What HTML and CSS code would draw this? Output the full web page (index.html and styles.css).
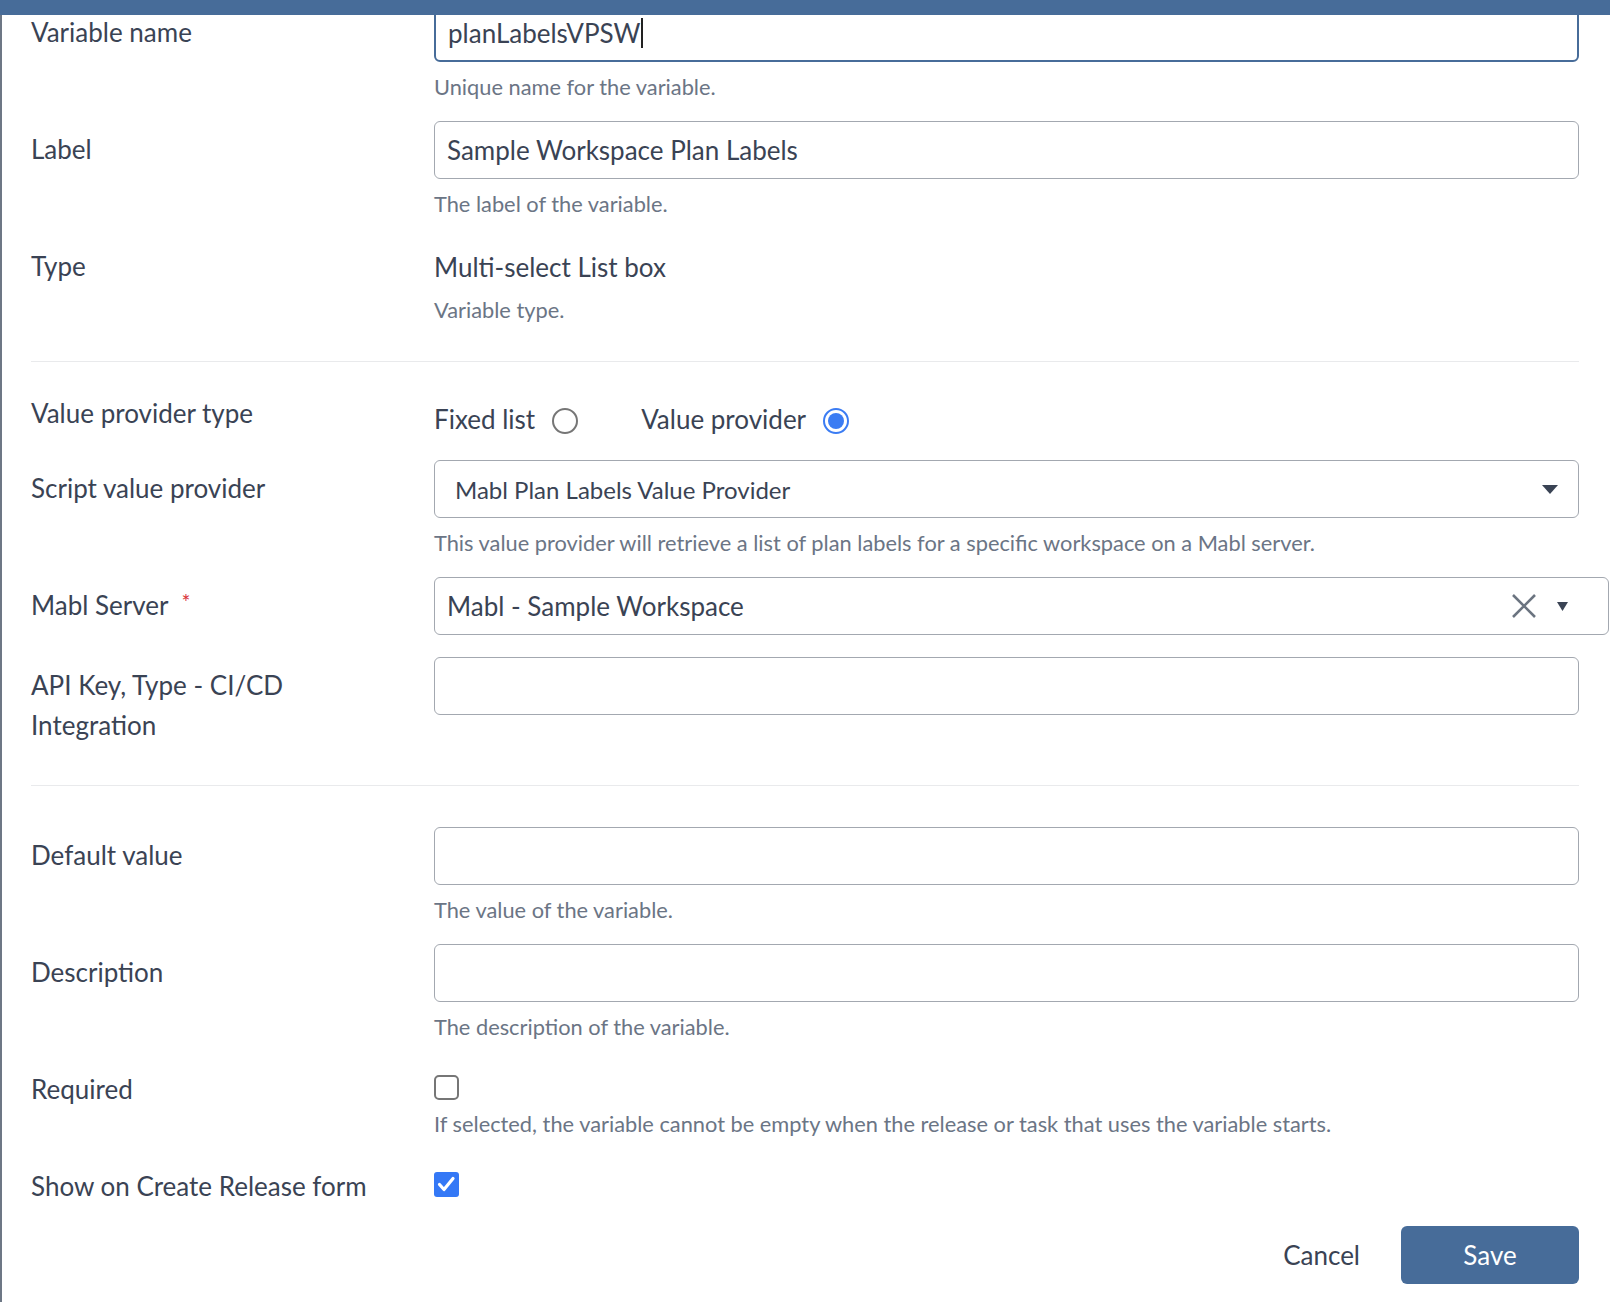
FILE: index.html
```html
<!DOCTYPE html>
<html>
<head>
<meta charset="utf-8">
<link rel="stylesheet" href="styles.css">
</head>
<body>
<div class="topbar"></div>
<div class="page">
  <form class="form">
    <div class="row r1">
      <div class="label">Variable name</div>
      <div class="field">
        <div class="input focused"><span>planLabelsVPSW</span><span class="caret"></span></div>
        <div class="help">Unique name for the variable.</div>
      </div>
    </div>
    <div class="row">
      <div class="label">Label</div>
      <div class="field">
        <div class="input"><span>Sample Workspace Plan Labels</span></div>
        <div class="help">The label of the variable.</div>
      </div>
    </div>
    <div class="row">
      <div class="label">Type</div>
      <div class="field">
        <div class="static">Multi-select List box</div>
        <div class="help">Variable type.</div>
      </div>
    </div>
    <div class="sep sep1"></div>
    <div class="row rradio">
      <div class="label">Value provider type</div>
      <div class="field">
        <div class="radios">
          <label class="radio-opt">Fixed list <span class="radio"></span></label>
          <label class="radio-opt">Value provider <span class="radio checked"></span></label>
        </div>
      </div>
    </div>
    <div class="row">
      <div class="label">Script value provider</div>
      <div class="field">
        <div class="input select wide-pad"><span>Mabl Plan Labels Value Provider</span>
          <svg class="arrow" width="16" height="9" viewBox="0 0 16 9"><path d="M0 0h16L8 9z" fill="#3a4354"/></svg>
        </div>
        <div class="help">This value provider will retrieve a list of plan labels for a specific workspace on a Mabl server.</div>
      </div>
    </div>
    <div class="row">
      <div class="label">Mabl Server <span class="req">*</span></div>
      <div class="field">
        <div class="input select extended"><span>Mabl - Sample Workspace</span>
          <span class="controls">
            <svg class="clear" width="26" height="26" viewBox="0 0 26 26"><path d="M2 2L24 24M24 2L2 24" stroke="#6b7480" stroke-width="2.6" fill="none"/></svg>
            <svg class="arrow-sm" width="11" height="9" viewBox="0 0 11 9"><path d="M0 0h11L5.5 9z" fill="#3a4354"/></svg>
          </span>
        </div>
      </div>
    </div>
    <div class="row rapi">
      <div class="label">API Key, Type - CI/CD Integration</div>
      <div class="field">
        <div class="input"></div>
      </div>
    </div>
    <div class="sep sep2"></div>
    <div class="row">
      <div class="label">Default value</div>
      <div class="field">
        <div class="input"></div>
        <div class="help">The value of the variable.</div>
      </div>
    </div>
    <div class="row">
      <div class="label">Description</div>
      <div class="field">
        <div class="input"></div>
        <div class="help">The description of the variable.</div>
      </div>
    </div>
    <div class="row rcheck">
      <div class="label">Required</div>
      <div class="field">
        <div class="cbwrap"><span class="checkbox"></span></div>
        <div class="help">If selected, the variable cannot be empty when the release or task that uses the variable starts.</div>
      </div>
    </div>
    <div class="row rcheck last">
      <div class="label">Show on Create Release form</div>
      <div class="field">
        <div class="cbwrap"><span class="checkbox checked"><svg width="25" height="25" viewBox="0 0 25 25"><path d="M5.5 12.5l4.5 5 9-11" stroke="#fff" stroke-width="3.2" fill="none" stroke-linecap="round" stroke-linejoin="round"/></svg></span></div>
      </div>
    </div>
    <div class="actions">
      <button type="button" class="btn-cancel">Cancel</button>
      <button type="button" class="btn-save">Save</button>
    </div>
  </form>
</div>
</body>
</html>
```
FILE: styles.css
```css
html, body {
  margin: 0;
  padding: 0;
  background: #fff;
}
body {
  font-family: Lato, "Open Sans", sans-serif;
  color: #3a4354;
  overflow: hidden;
  height: 1302px;
}
.topbar {
  position: fixed;
  top: 0;
  left: 0;
  right: 0;
  height: 15px;
  background: #476c99;
  z-index: 10;
}
.page {
  border-left: 2px solid #6d7785;
  height: 1302px;
  box-sizing: border-box;
  padding: 4px 31px 0 29px;
}
.form {
  display: flex;
  flex-direction: column;
}
.row {
  display: grid;
  grid-template-columns: 403px 1fr;
  margin-bottom: 22px;
}
.label {
  font-size: 26px;
  line-height: 40px;
  padding-top: 8px;
  color: #3a4354;
}
.label .req {
  color: #d9343a;
  font-size: 21px;
  vertical-align: top;
  margin-left: 7px;
  position: relative;
  top: -3px;
}
.field {
  display: flex;
  flex-direction: column;
  min-width: 0;
}
.input {
  height: 58px;
  box-sizing: border-box;
  border: 1.5px solid #a3a8b0;
  border-radius: 6px;
  display: flex;
  align-items: center;
  padding: 0 12px;
  font-size: 26px;
  color: #3a4354;
  background: #fff;
}
.input.focused {
  border: 2px solid #476c99;
  padding-left: 12px;
}
.caret {
  display: inline-block;
  width: 1.5px;
  height: 30px;
  background: #222;
  margin-left: 1px;
}
.input.wide-pad {
  padding-left: 20px;
  padding-right: 20px;
  font-size: 24px;
}
.select {
  justify-content: space-between;
}
.arrow {
  flex: none;
}
.extended {
  margin-right: -30px;
  padding-right: 40px;
}
.controls {
  display: flex;
  align-items: center;
  gap: 20px;
}
.help {
  margin-top: 13px;
  font-size: 21.8px;
  line-height: 24px;
  color: #6b7585;
}
.static {
  padding-top: 11px;
  font-size: 26px;
  line-height: 36px;
}
.sep {
  height: 1px;
  background: #e9eaec;
}
.sep1 {
  margin-top: 17px;
  margin-bottom: 23px;
}
.sep2 {
  margin-top: 0;
  margin-bottom: 41px;
}
.rradio {
  margin-bottom: 24px;
}
.radios {
  display: flex;
  align-items: center;
  gap: 63px;
  padding-top: 17px;
  height: 51px;
  box-sizing: border-box;
}
.radio-opt {
  display: flex;
  align-items: center;
  gap: 17px;
  font-size: 26px;
  line-height: 34px;
}
.radio {
  width: 26px;
  height: 26px;
  box-sizing: border-box;
  border: 2px solid #767676;
  border-radius: 50%;
  position: relative;
  top: 2px;
}
.radio.checked {
  border-color: #3b7cf3;
}
.radio.checked::after {
  content: "";
  position: absolute;
  left: 3px;
  top: 3px;
  width: 16px;
  height: 16px;
  border-radius: 50%;
  background: #3b7cf3;
}
.rapi .label {
  padding-right: 60px;
}
.rapi {
  margin-bottom: 40px;
}
.rcheck {
  margin-bottom: 22px;
}
.rcheck.last {
  margin-bottom: 20px;
}
.cbwrap {
  padding-top: 14px;
  height: 25px;
  display: flex;
}
.checkbox {
  width: 25px;
  height: 25px;
  box-sizing: border-box;
  border: 2px solid #767676;
  border-radius: 5px;
  display: inline-block;
}
.checkbox.checked {
  background: #3478f6;
  border: none;
  border-radius: 3px;
}
.checkbox svg {
  display: block;
}
.rcheck .help {
  margin-top: 12px;
}
.actions {
  display: flex;
  justify-content: flex-end;
  align-items: center;
  gap: 41px;
  margin-top: 0;
}
.btn-cancel {
  background: none;
  border: none;
  font-family: Lato, "Open Sans", sans-serif;
  font-size: 26px;
  color: #3a4354;
  padding: 0;
}
.btn-save {
  width: 178px;
  height: 58px;
  background: #476c99;
  border: none;
  border-radius: 6px;
  color: #fff;
  font-family: Lato, "Open Sans", sans-serif;
  font-size: 26px;
}
```
